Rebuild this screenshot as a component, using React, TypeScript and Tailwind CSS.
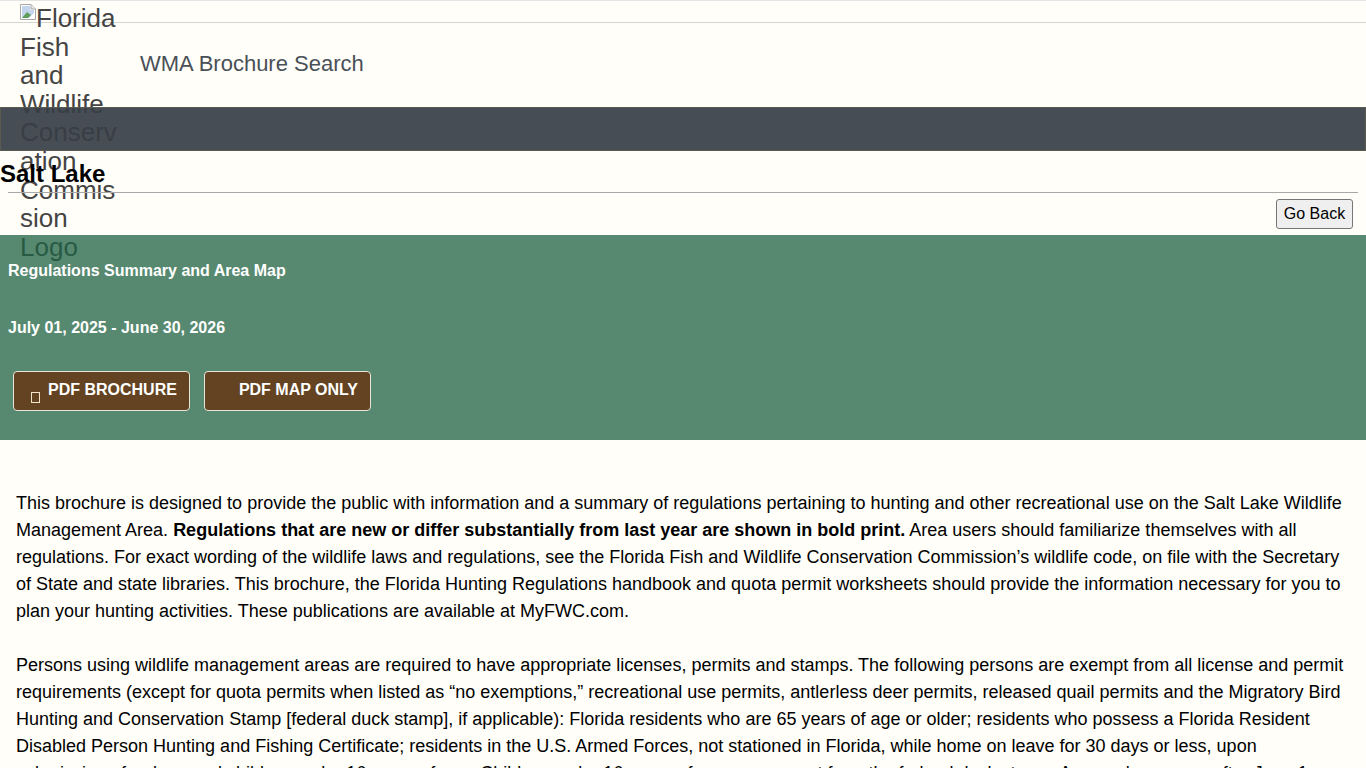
function BrokenImage() {
  return (
    <svg width="16" height="16" viewBox="0 0 16 16" className="inline-block align-top">
      <path d="M0.5 0.5H11L15.5 5V15.5H0.5Z" fill="#ffffff" stroke="#a8a8a8" />
      <path d="M11 0.5V5H15.5" fill="#e8e8e8" stroke="#a8a8a8" />
      <path d="M2 2H10V6H14V9L9 14H2Z" fill="#c3d4ee" />
      <path d="M2 14L7 8L11 11L8 14Z" fill="#5f9e58" />
      <path d="M14 9L15 10V15H9Z" fill="#ffffff" />
    </svg>
  );
}

function PdfButton({ label, glyph }: { label: string; glyph?: boolean }) {
  return (
    <a className="flex h-10 items-start rounded border border-[#e8e4da] bg-[#634321] pl-[17px] pr-3 pt-2 text-base font-bold leading-[20px] text-white">
      <span className="w-[17px] shrink-0 pt-3">
        {glyph && <span className="block h-[11px] w-[9px] border border-[#f3e3c8]" />}
      </span>
      {label}
    </a>
  );
}

export default function App() {
  return (
    <div className="h-screen overflow-hidden bg-[#fffef8] font-['Liberation_Sans',Arial,sans-serif] text-black">
      <header className="h-[107px] border-t border-[#e4e4e4]">
        <div className="h-[22px] border-b border-[#d4d4d0]" />
        <div className="flex items-start pl-5">
          <div className="-mt-[19px] h-[84px] w-[97px] shrink-0 text-[26px] leading-[1.1] break-words text-[#444444]">
            <BrokenImage />
            Florida Fish and Wildlife Conservation Commission Logo
          </div>
          <div className="ml-[23px] mt-[27px] text-[22px] leading-[28px] text-[#495057]">WMA Brochure Search</div>
        </div>
      </header>

      <div className="relative h-11 border border-[#5a5a4e] bg-[#373e45]/[.92]" />

      <section className="relative h-[84px]">
        <h1 className="pt-[9px] text-2xl font-bold leading-[28px]">Salt Lake</h1>
        <div className="mx-2 mt-[4px] border-t border-[#a9a9a9]" />
        <div className="flex justify-end pr-[13px] pt-[6px]">
          <button className="h-[30px] w-[77px] rounded-[3px] border border-[#767676] bg-[#efefef] text-base">Go Back</button>
        </div>
      </section>

      <section className="relative h-[205px] bg-[#1f6144]/75 pl-2 text-white">
        <p className="pt-[27px] text-base font-bold leading-[18px]">Regulations Summary and Area Map</p>
        <p className="pt-[39px] text-base font-bold leading-[18px]">July 01, 2025 - June 30, 2026</p>
        <div className="flex gap-[14px] pl-[5px] pt-[34px]">
          <PdfButton label="PDF BROCHURE" glyph />
          <PdfButton label="PDF MAP ONLY" />
        </div>
      </section>

      <main className="relative px-4 pt-[50px] text-lg leading-[27px]">
        <p className="mb-[27px]">
          This brochure is designed to provide the public with information and a summary of regulations pertaining to
          hunting and other recreational use on the Salt Lake Wildlife Management Area.{' '}
          <strong>Regulations that are new or differ substantially from last year are shown in bold print.</strong> Area
          users should familiarize themselves with all regulations. For exact wording of the wildlife laws and
          regulations, see the Florida Fish and Wildlife Conservation Commission’s wildlife code, on file with the
          Secretary of State and state libraries. This brochure, the Florida Hunting Regulations handbook and quota
          permit worksheets should provide the information necessary for you to plan your hunting activities. These
          publications are available at MyFWC.com.
        </p>
        <p>
          Persons using wildlife management areas are required to have appropriate licenses, permits and stamps. The
          following persons are exempt from all license and permit requirements (except for quota permits when listed
          as “no exemptions,” recreational use permits, antlerless deer permits, released quail permits and the
          Migratory Bird Hunting and Conservation Stamp [federal duck stamp], if applicable): Florida residents who are
          65 years of age or older; residents who possess a Florida Resident Disabled Person Hunting and Fishing
          Certificate; residents in the U.S. Armed Forces, not stationed in Florida, while home on leave for 30 days or
          less, upon submission of orders; and children under 16 years of age. Children under 16 years of age are exempt
          from the federal duck stamp. Anyone born on or after June 1, 1975 must have a hunter safety card.
        </p>
      </main>
    </div>
  );
}
